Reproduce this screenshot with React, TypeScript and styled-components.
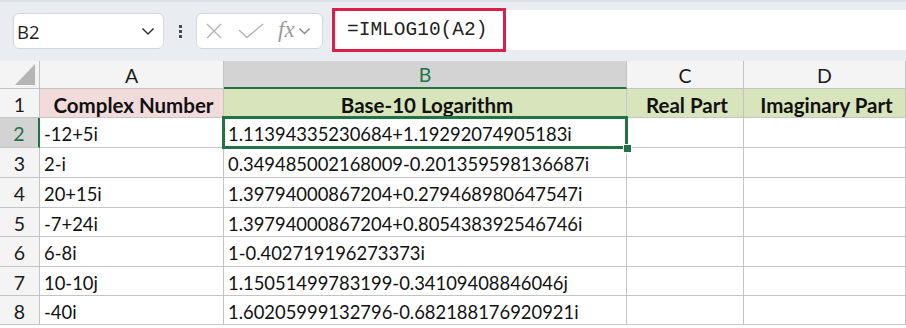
import React from "react";
import styled, { createGlobalStyle } from "styled-components";

const GlobalStyle = createGlobalStyle`
  html, body {
    margin: 0;
    padding: 0;
    background: #ffffff;
  }
  body {
    width: 906px;
    height: 328px;
    overflow: hidden;
    font-family: "Lato", "Open Sans", sans-serif;
  }
`;

const Page = styled.div`
  width: 906px;
  height: 328px;
  overflow: hidden;
  background: #fff;
`;

const TopBar = styled.div`
  height: 61px;
  box-sizing: border-box;
  background: #e9edf1;
  border-top: 2px solid #dde2e7;
  display: flex;
  align-items: flex-start;
  padding: 11px 0 0 13px;
`;

const NameBox = styled.div`
  width: 151px;
  height: 36px;
  box-sizing: border-box;
  background: #fff;
  border: 1px solid #d3d7dc;
  border-radius: 6px;
  display: flex;
  align-items: center;
  justify-content: space-between;
  padding: 0 8px 0 3px;
  font-family: "Open Sans", "Noto Sans", sans-serif;
  font-size: 18.5px;
  color: #1f1f1f;
`;

const Dots = styled.div`
  width: 32px;
  height: 36px;
  display: flex;
  flex-direction: column;
  align-items: center;
  justify-content: center;
  gap: 2px;
  span {
    width: 3px;
    height: 3px;
    background: #4a4a4a;
  }
`;

const FuncBox = styled.div`
  width: 127px;
  height: 36px;
  box-sizing: border-box;
  background: #fff;
  border: 1px solid #d3d7dc;
  border-radius: 6px;
  display: flex;
  align-items: center;
  padding: 0 0 0 8px;
`;

const FxText = styled.span`
  font-family: "Liberation Serif", serif;
  font-style: italic;
  font-size: 23px;
  color: #9a9a9a;
  margin: -3px 3px 0 14px;
`;

const FormulaBar = styled.div`
  flex: 1;
  height: 40px;
  margin: -3px 0 0 9px;
  background: #fff;
  display: flex;
  align-items: center;
`;

const Highlight = styled.div`
  height: 44px;
  box-sizing: border-box;
  border: 3px solid #dc1e4a;
  display: flex;
  align-items: center;
  padding: 0 16px 0 12px;
  font-family: "Liberation Mono", "DejaVu Sans Mono", monospace;
  font-size: 19.5px;
  color: #222;
`;

const Sheet = styled.div`
  display: grid;
  grid-template-columns: 40px 184px 403px 117px 162px;
  grid-template-rows: 28px 29px 30px 30px 30px 29px 30px 29px 29px;
`;

const Corner = styled.div`
  background: #f4f4f4;
  border-right: 1px solid #c4c4c4;
  border-bottom: 1px solid #c4c4c4;
  box-sizing: border-box;
  display: flex;
  align-items: flex-end;
  justify-content: flex-end;
  padding: 0 4px 3px 0;
`;

const ColHeader = styled.div<{ $active?: boolean }>`
  box-sizing: border-box;
  background: ${(p) => (p.$active ? "#d3d3d3" : "#f4f4f4")};
  border-right: 1px solid #c4c4c4;
  border-bottom: ${(p) => (p.$active ? "2px solid #217346" : "1px solid #c4c4c4")};
  color: ${(p) => (p.$active ? "#217346" : "#1a1a1a")};
  display: flex;
  align-items: center;
  justify-content: center;
  font-size: 19.5px;
  padding-top: 1px;
`;

const RowHeader = styled.div<{ $active?: boolean }>`
  box-sizing: border-box;
  background: ${(p) => (p.$active ? "#d3d3d3" : "#f4f4f4")};
  border-right: ${(p) => (p.$active ? "2px solid #217346" : "1px solid #c4c4c4")};
  border-bottom: 1px solid #c4c4c4;
  color: ${(p) => (p.$active ? "#217346" : "#1a1a1a")};
  display: flex;
  align-items: center;
  justify-content: center;
  font-size: 19.5px;
  padding-top: 2px;
`;

const Cell = styled.div<{ $bg?: string; $head?: boolean; $selected?: boolean }>`
  position: relative;
  box-sizing: border-box;
  background: ${(p) => p.$bg || "#fff"};
  border-right: 1px solid #c4c4c4;
  border-bottom: 1px solid #c4c4c4;
  display: flex;
  align-items: center;
  justify-content: ${(p) => (p.$head ? "center" : "flex-start")};
  padding: 3px 0 0 4px;
  font-size: ${(p) => (p.$head ? "20.5px" : "18.4px")};
  font-weight: ${(p) => (p.$head ? 700 : 400)};
  color: #111;
  white-space: nowrap;
  z-index: ${(p) => (p.$selected ? 2 : "auto")};
  ${(p) =>
    p.$selected &&
    `
    &::after {
      content: "";
      position: absolute;
      left: -2px;
      top: -2px;
      right: -2px;
      bottom: -2px;
      border: 3px solid #217346;
      pointer-events: none;
    }
    &::before {
      content: "";
      position: absolute;
      right: -5px;
      bottom: -5px;
      width: 7px;
      height: 7px;
      background: #217346;
      outline: 1px solid #fff;
      z-index: 3;
    }
  `}
`;

const Chevron = ({ size = 14, color = "#333" }: { size?: number; color?: string }) => (
  <svg width={size} height={size / 2 + 2} viewBox="0 0 14 9">
    <polyline points="1.5,1.5 7,7 12.5,1.5" fill="none" stroke={color} strokeWidth="1.5" />
  </svg>
);

const columns = ["A", "B", "C", "D"];
const headers = ["Complex Number", "Base-10 Logarithm", "Real Part", "Imaginary Part"];
const rows: [string, string][] = [
  ["-12+5i", "1.11394335230684+1.19292074905183i"],
  ["2-i", "0.349485002168009-0.201359598136687i"],
  ["20+15i", "1.39794000867204+0.279468980647547i"],
  ["-7+24i", "1.39794000867204+0.805438392546746i"],
  ["6-8i", "1-0.402719196273373i"],
  ["10-10j", "1.15051499783199-0.34109408846046j"],
  ["-40i", "1.60205999132796-0.682188176920921i"],
];

export default function App() {
  return (
    <Page>
      <GlobalStyle />
      <TopBar>
        <NameBox>
          <span>B2</span>
          <Chevron size={14} color="#333" />
        </NameBox>
        <Dots>
          <span />
          <span />
          <span />
        </Dots>
        <FuncBox>
          <svg width="18" height="18" viewBox="0 0 18 18">
            <path d="M2 2 L16 16 M16 2 L2 16" stroke="#b3b3b3" strokeWidth="1.4" fill="none" />
          </svg>
          <svg width="26" height="16" viewBox="0 0 26 16" style={{ marginLeft: 15 }}>
            <polyline points="1,7 9,14.5 25,1" stroke="#b3b3b3" strokeWidth="1.4" fill="none" />
          </svg>
          <FxText>fx</FxText>
          <Chevron size={13} color="#8a8a8a" />
        </FuncBox>
        <FormulaBar>
          <Highlight>=IMLOG10(A2)</Highlight>
        </FormulaBar>
      </TopBar>
      <Sheet>
        <Corner>
          <svg width="20" height="21" viewBox="0 0 20 21">
            <polygon points="20,0 20,21 0,21" fill="#b5b5b5" />
          </svg>
        </Corner>
        {columns.map((c) => (
          <ColHeader key={c} $active={c === "B"}>
            {c}
          </ColHeader>
        ))}
        <RowHeader>1</RowHeader>
        {headers.map((h, i) => (
          <Cell key={h} $head $bg={i === 0 ? "#f2dcdb" : "#d8e4bc"}>
            {h}
          </Cell>
        ))}
        {rows.map(([a, b], i) => (
          <React.Fragment key={a}>
            <RowHeader $active={i === 0}>{i + 2}</RowHeader>
            <Cell>{a}</Cell>
            <Cell $selected={i === 0}>{b}</Cell>
            <Cell />
            <Cell />
          </React.Fragment>
        ))}
      </Sheet>
    </Page>
  );
}
